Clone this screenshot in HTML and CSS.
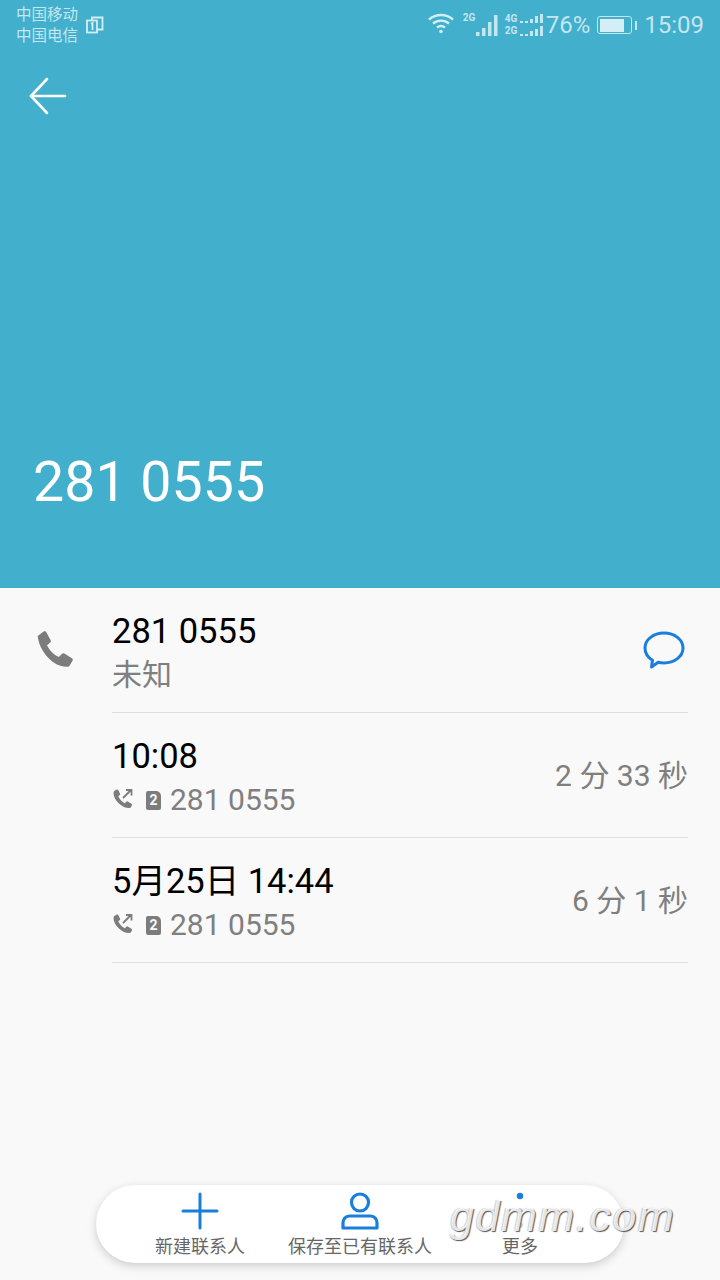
FILE: index.html
```html
<!DOCTYPE html>
<html lang="zh-CN">
<head>
    <meta charset="UTF-8">
    <title>通话详情</title>
    <link rel="stylesheet" href="styles.css">
</head>
<body>
    <header class="hero">
        <div class="status-bar">
            <div class="carriers">
                <div>中国移动</div>
                <div>中国电信</div>
            </div>
            <svg class="sim-icon" width="18" height="18" viewBox="0 0 18 18" fill="none" stroke="#d3eef5" stroke-width="1.800">
                <rect x="1" y="4.500" width="10" height="12"/>
                <path d="M6 4.500V1.500h10.500v12H11"/>
                <path d="M5 8l1.500-1v7"/>
            </svg>
            <div class="status-right">
                <svg class="wifi" width="28" height="24" viewBox="0 0 28 24" fill="none" stroke="#d3eef5" stroke-width="2.400">
                    <path d="M2 8.500c7-6 17-6 24 0"/>
                    <path d="M6 12.500c4.500-3.800 11.500-3.800 16 0"/>
                    <path d="M10 16.500c2.400-1.900 5.600-1.900 8 0"/>
                    <circle cx="14" cy="20.500" r="1.800" fill="#d3eef5" stroke="none"/>
                </svg>
                <div class="signal signal-one">
                    <span class="net-label">2G</span>
                    <svg width="24" height="24" viewBox="0 0 24 24" fill="#c4e6f0">
                        <rect x="1" y="19" width="3.500" height="4"/>
                        <rect x="7" y="15" width="3.500" height="8"/>
                        <rect x="13" y="9" width="3.500" height="14"/>
                        <rect x="19" y="2" width="3.500" height="21"/>
                    </svg>
                </div>
                <div class="signal signal-two">
                    <div class="net-stack">
                        <span>4G</span>
                        <span>2G</span>
                    </div>
                    <svg width="26" height="24" viewBox="0 0 26 24" fill="#c4e6f0">
                        <rect x="1" y="8" width="3" height="2"/>
                        <rect x="6" y="8" width="3" height="2"/>
                        <rect x="11" y="6" width="3" height="4"/>
                        <rect x="16" y="3" width="3" height="7"/>
                        <rect x="21" y="1" width="3" height="9"/>
                        <rect x="1" y="21" width="3" height="2"/>
                        <rect x="6" y="21" width="3" height="2"/>
                        <rect x="11" y="18" width="3" height="5"/>
                        <rect x="16" y="16" width="3" height="7"/>
                        <rect x="21" y="13" width="3" height="10"/>
                    </svg>
                </div>
                <span class="battery-pct">76%</span>
                <div class="battery">
                    <div class="battery-body">
                        <div class="battery-fill"></div>
                    </div>
                    <div class="battery-tip"></div>
                </div>
                <span class="clock">15:09</span>
            </div>
        </div>
        <div class="back-row">
            <svg width="38" height="38" viewBox="0 0 38 38" fill="none" stroke="#fff" stroke-width="2.600" stroke-linecap="round" stroke-linejoin="round">
                <path d="M36 19H2"/>
                <path d="M18 2L2 19l16 17"/>
            </svg>
        </div>
        <h1 class="hero-number">281 0555</h1>
    </header>

    <main class="details">
        <div class="row">
            <div class="row-icon">
                <svg width="41" height="41" viewBox="0 0 38 38" fill="#7c7c7c">
                    <path d="M2.500 5.500L8 1.500c1-.6 2-.4 2.500.6l4 7.500c.4.800.2 1.400-.4 2l-3 2.500c2.500 5 6 8.500 11 11l3-3c.6-.6 1.400-.7 2.100-.3l7 4.300c.9.6 1.100 1.500.6 2.300l-2.500 4.200c-.6 1-1.600 1.500-3.300 1.400C17 34 4 20 2.500 5.500z"/>
                </svg>
            </div>
            <div class="row-body">
                <div class="row-text">
                    <div class="title">281 0555</div>
                    <div class="sub">未知</div>
                </div>
                <svg class="msg-icon" width="42" height="38" viewBox="0 0 42 38" fill="none" stroke="#1a7fdc" stroke-width="3" stroke-linejoin="round">
                    <path d="M21 2c10.500 0 19 6.500 19 15s-8.500 15-19 15c-2 0-4-.2-5.800-.7L8.500 36l1-6.800C5 26.500 2 22 2 17 2 8.500 10.500 2 21 2z"/>
                </svg>
            </div>
        </div>
        <div class="row">
            <div class="row-icon"></div>
            <div class="row-body">
                <div class="row-text">
                    <div class="title">10:08</div>
                    <div class="sub call-line">
                        <svg class="call-out" width="22" height="22" viewBox="0 0 22 22" fill="#7c7c7c">
                            <path d="M3 1.500l2-1c.6-.2 1 0 1.300.5l1.800 3.800c.2.500.1 1-.3 1.300L6.300 7.300c1.100 2.800 3.600 5.500 6.500 7l1.600-1.600c.4-.4.900-.4 1.300-.2l3.800 2.200c.5.300.6.800.5 1.300l-.9 2c-.4.800-1.100 1.200-2 1.100C9.500 19 1.500 10.500 1.500 3.900c0-1 .6-2 1.500-2.400z"/>
                            <path d="M11 9l8-8M14 1h5.500v5.500" fill="none" stroke="#7c7c7c" stroke-width="1.800"/>
                        </svg>
                        <span class="sim-badge">2</span>
                        <span>281 0555</span>
                    </div>
                </div>
                <div class="duration">2 分 33 秒</div>
            </div>
        </div>
        <div class="row">
            <div class="row-icon"></div>
            <div class="row-body">
                <div class="row-text">
                    <div class="title">5月25日 14:44</div>
                    <div class="sub call-line">
                        <svg class="call-out" width="22" height="22" viewBox="0 0 22 22" fill="#7c7c7c">
                            <path d="M3 1.500l2-1c.6-.2 1 0 1.300.5l1.800 3.800c.2.500.1 1-.3 1.300L6.300 7.300c1.100 2.800 3.600 5.500 6.500 7l1.600-1.600c.4-.4.900-.4 1.300-.2l3.800 2.200c.5.300.6.800.5 1.300l-.9 2c-.4.800-1.100 1.200-2 1.100C9.500 19 1.500 10.500 1.500 3.900c0-1 .6-2 1.500-2.400z"/>
                            <path d="M11 9l8-8M14 1h5.500v5.500" fill="none" stroke="#7c7c7c" stroke-width="1.800"/>
                        </svg>
                        <span class="sim-badge">2</span>
                        <span>281 0555</span>
                    </div>
                </div>
                <div class="duration">6 分 1 秒</div>
            </div>
        </div>
    </main>

    <nav class="action-bar">
        <div class="action action-new">
            <svg width="38" height="38" viewBox="0 0 38 38" fill="none" stroke="#1a7fdc" stroke-width="3" stroke-linecap="round">
                <path d="M19 2v34M2 19h34"/>
            </svg>
            <span>新建联系人</span>
        </div>
        <div class="action action-save">
            <svg width="38" height="38" viewBox="0 0 38 38" fill="none" stroke="#1a7fdc" stroke-width="3.200">
                <circle cx="19" cy="10.500" r="8.500"/>
                <path d="M9 24h20c4 0 7 3 7 6.500V36H2v-5.500C2 27 5 24 9 24z" stroke-linejoin="round"/>
            </svg>
            <span>保存至已有联系人</span>
        </div>
        <div class="action action-more">
            <svg width="38" height="38" viewBox="0 0 38 38">
                <circle cx="19" cy="4" r="3.200" fill="#1a7fdc"/>
                <circle cx="19" cy="19" r="3" fill="#bcdcf5"/>
                <circle cx="19" cy="33" r="3" fill="#bcdcf5"/>
            </svg>
            <span>更多</span>
        </div>
    </nav>

    <div class="watermark">gdmm.com</div>
</body>
</html>
```

FILE: styles.css
```css
html, body {
    margin: 0;
    padding: 0;
}
body {
    position: relative;
    width: 720px;
    height: 1280px;
    overflow: hidden;
    background-color: #f9f9f9;
    font-family: Roboto, "Noto Sans CJK SC", sans-serif;
}
.hero {
    height: 588px;
    box-sizing: border-box;
    background-color: #42afcd;
    display: flex;
    flex-direction: column;
    color: #fff;
}
.status-bar {
    height: 50px;
    display: flex;
    padding: 5px 16px 0;
    box-sizing: border-box;
    align-items: flex-start;
}
.carriers {
    font-size: 15.500px;
    line-height: 21px;
    color: #c4e6f0;
    width: 70px;
}
.sim-icon {
    margin-top: 11px;
}
.status-right {
    margin-left: auto;
    display: flex;
    align-items: center;
    height: 40px;
    color: #c4e6f0;
}
.wifi {
    margin-top: -4px;
}
.signal {
    display: flex;
    align-items: flex-end;
}
.signal-one {
    margin-left: 8px;
}
.net-label {
    font-size: 10px;
    font-weight: 700;
    line-height: 12px;
    align-self: flex-start;
    width: 12px;
    margin-top: -1px;
}
.signal-two {
    margin-left: 6px;
}
.net-stack {
    display: flex;
    flex-direction: column;
    font-size: 10px;
    font-weight: 700;
    line-height: 12px;
    width: 14px;
}
.battery-pct {
    font-size: 24px;
    margin-left: 1px;
}
.battery {
    display: flex;
    align-items: center;
    margin-left: 7px;
}
.battery-body {
    width: 30px;
    height: 13px;
    border: 1.500px solid #c4e6f0;
    border-radius: 3px;
    padding: 1.500px;
    box-sizing: content-box;
}
.battery-fill {
    width: 24px;
    height: 13px;
    background-color: #d3eef5;
}
.battery-tip {
    width: 2px;
    height: 9px;
    margin-left: 3px;
    background-color: #c4e6f0;
}
.clock {
    font-size: 24px;
    margin-left: 7px;
}
.back-row {
    padding: 27px 0 0 29px;
    height: 38px;
}
.hero-number {
    margin: auto 0 0 33px;
    padding-bottom: 75px;
    font-size: 55.500px;
    line-height: 60px;
    font-weight: 400;
}
.row {
    display: flex;
    height: 125px;
}
.row-icon {
    width: 112px;
    flex-shrink: 0;
    padding: 42px 0 0 35px;
    box-sizing: border-box;
}
.row-body {
    flex: 1;
    margin-right: 32px;
    border-bottom: 1px solid #dedede;
    display: flex;
    align-items: center;
    justify-content: space-between;
    box-sizing: border-box;
}
.row-text {
    margin-top: 6px;
}
.title {
    font-size: 34.500px;
    line-height: 44px;
    color: #000;
}
.sub {
    font-size: 30px;
    line-height: 44px;
    color: #7f7f7f;
}
.call-line {
    display: flex;
    align-items: center;
}
.call-out {
    margin-right: 12px;
}
.sim-badge {
    width: 15px;
    height: 19px;
    margin-right: 9px;
    background-color: #7c7c7c;
    border-radius: 2px 5px 2px 2px;
    color: #f9f9f9;
    font-size: 14px;
    line-height: 19px;
    font-weight: 700;
    text-align: center;
}
.msg-icon {
    margin-right: 3px;
}
.duration {
    font-size: 30px;
    color: #7f7f7f;
    margin-top: -4px;
}
.action-bar {
    position: absolute;
    left: 96px;
    top: 1185px;
    width: 528px;
    height: 78px;
    box-sizing: border-box;
    background-color: #fff;
    border-radius: 39px;
    box-shadow: 0 3px 10px rgba(0, 0, 0, 0.18);
    display: flex;
}
.action {
    position: absolute;
    top: 7px;
    transform: translateX(-50%);
    display: flex;
    flex-direction: column;
    align-items: center;
    white-space: nowrap;
    font-size: 18px;
    line-height: 20px;
    color: #666;
}
.action svg {
    margin-bottom: 7px;
}
.action-new {
    left: 104px;
}
.action-save {
    left: 264px;
}
.action-more {
    left: 424px;
}
.watermark {
    position: absolute;
    left: 450px;
    top: 1198px;
    font-family: "Liberation Sans", sans-serif;
    font-style: italic;
    font-size: 43px;
    line-height: 36px;
    letter-spacing: 1.600px;
    color: rgba(255, 255, 255, 0.85);
    text-shadow: 1px 1px 1px #555, -1px 0 1px rgba(0, 0, 0, 0.2);
}
```
